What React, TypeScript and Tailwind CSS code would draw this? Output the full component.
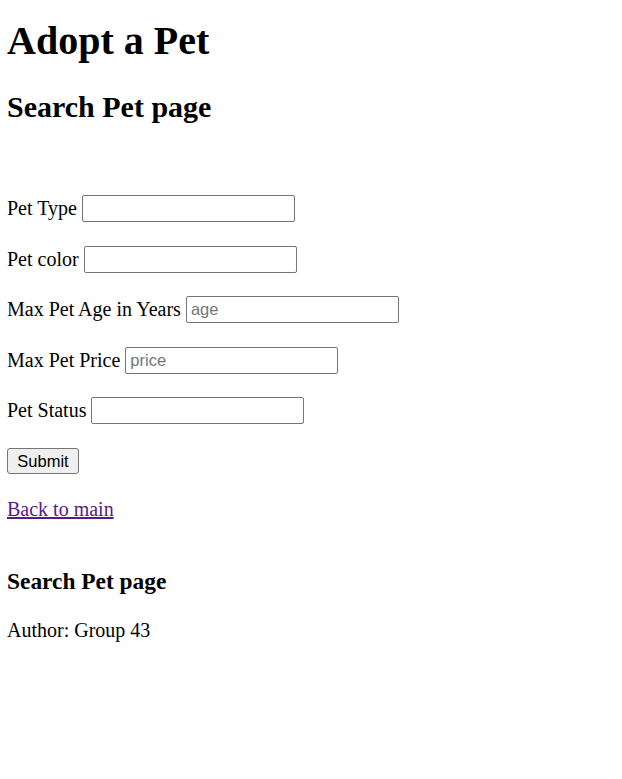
import React from "react";

const serif = { fontFamily: '"Liberation Serif", "Times New Roman", serif' };

function Row({ label, placeholder, mt }: { label: string; placeholder?: string; mt: string }) {
  return (
    <div className={`flex items-center gap-[5px] h-[27px] ${mt}`}>
      <span className="text-[20px] leading-[20px] text-black whitespace-nowrap">{label}</span>
      <input
        type="text"
        placeholder={placeholder}
        className="w-[213px] h-[27px] border border-[#767676] rounded-[2px] px-[4px] text-[16.5px] bg-white text-black placeholder:text-[#757575] outline-none"
        style={{ fontFamily: '"Liberation Sans", Arial, sans-serif' }}
      />
    </div>
  );
}

export default function App() {
  return (
    <div className="min-h-[779px] bg-white text-black px-[7px] pt-[20.5px]" style={serif}>
      <h1 className="text-[40px] leading-[40px] font-bold">Adopt a Pet</h1>
      <h2 className="text-[30px] leading-[30px] font-bold mt-[31.4px]">Search Pet page</h2>
      <form className="flex flex-col" onSubmit={(e) => e.preventDefault()}>
        <Row label="Pet Type" mt="mt-[73.1px]" />
        <Row label="Pet color" mt="mt-[24px]" />
        <Row label="Max Pet Age in Years" placeholder="age" mt="mt-[23px]" />
        <Row label="Max Pet Price" placeholder="price" mt="mt-[24px]" />
        <Row label="Pet Status" mt="mt-[23px]" />
        <div className="mt-[24px] h-[26px]">
          <button
            type="submit"
            className="w-[72px] h-[26px] bg-[#efefef] border border-[#767676] rounded-[3px] text-[16.5px] text-black"
            style={{ fontFamily: '"Liberation Sans", Arial, sans-serif' }}
          >
            Submit
          </button>
        </div>
      </form>
      <div className="mt-[25px] text-[20px] leading-[20px]">
        <a href="#" className="text-[#551a8b] underline">Back to main</a>
      </div>
      <h3 className="mt-[50px] text-[23.4px] leading-[24px] font-bold">Search Pet page</h3>
      <p className="mt-[27.5px] text-[20px] leading-[20px]">Author: Group 43</p>
    </div>
  );
}
